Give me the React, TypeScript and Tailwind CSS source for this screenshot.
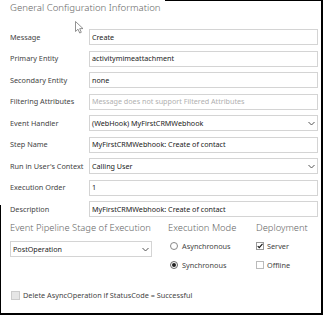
import { ReactNode } from 'react'

const font = { fontFamily: '"Noto Sans", "Open Sans", sans-serif' }

function Chevron() {
  return (
    <svg width="7" height="5" viewBox="0 0 7 5" className="shrink-0">
      <polyline points="0.5,1 3.5,4 6.5,1" fill="none" stroke="#555" strokeWidth="1" />
    </svg>
  )
}

function Field({ label, children }: { label: string; children: ReactNode }) {
  return (
    <div className="flex items-center h-4">
      <div className="w-[79px] shrink-0 text-[7.3px] text-[#444] whitespace-nowrap">{label}</div>
      {children}
    </div>
  )
}

function TextBox({ value, muted }: { value: string; muted?: boolean }) {
  return (
    <div
      className={`flex-1 h-4 border border-[#d4d4d4] flex items-center px-[2px] text-[7.2px] whitespace-nowrap overflow-hidden ${
        muted ? 'text-[#b0b0b0]' : 'text-[#222]'
      }`}
    >
      {value}
    </div>
  )
}

function SelectBox({ value, className = 'flex-1' }: { value: string; className?: string }) {
  return (
    <div
      className={`${className} h-4 border border-[#d4d4d4] flex items-center justify-between pl-[2px] pr-[2px] text-[7.2px] text-[#222] whitespace-nowrap`}
    >
      <span>{value}</span>
      <Chevron />
    </div>
  )
}

function Cursor() {
  return (
    <svg width="9" height="13" viewBox="0 0 9 13" className="absolute left-[75px] top-[21px]">
      <path d="M0.5 0.5 L0.5 10.5 L3 8.2 L4.7 12 L6.3 11.3 L4.7 7.6 L8 7.6 Z" fill="#fff" stroke="#777" strokeWidth="0.8" />
    </svg>
  )
}

export default function App() {
  return (
    <div className="relative w-[323px] h-[315px] bg-white border-r-2 border-b-2 border-black overflow-hidden" style={font}>
      <div className="absolute left-[165px] right-0 top-0 h-[1px] bg-black" />
      <div className="absolute left-0 top-[205px] bottom-0 w-[1px] bg-black" />
      <Cursor />

      <div className="pl-[10px] pr-[3px]">
        <div className="h-[29px] pt-[1px] text-[9.6px] font-light text-[#666] leading-[14px] whitespace-nowrap">
          General Configuration Information
        </div>

        <div className="flex flex-col gap-[5.5px]">
          <Field label="Message"><TextBox value="Create" /></Field>
          <Field label="Primary Entity"><TextBox value="activitymimeattachment" /></Field>
          <Field label="Secondary Entity"><TextBox value="none" /></Field>
          <Field label="Filtering Attributes"><TextBox value="Message does not support Filtered Attributes" muted /></Field>
          <Field label="Event Handler"><SelectBox value="(WebHook) MyFirstCRMWebhook" /></Field>
          <Field label="Step Name"><TextBox value="MyFirstCRMWebhook: Create of contact" /></Field>
          <Field label="Run in User's Context"><SelectBox value="Calling User" /></Field>
          <Field label="Execution Order"><TextBox value="1" /></Field>
          <Field label="Description"><TextBox value="MyFirstCRMWebhook: Create of contact" /></Field>
        </div>

        <div className="flex mt-[4px]">
          <div className="w-[158px] shrink-0">
            <div className="text-[9.4px] font-light text-[#666] leading-[14px] h-[20px] whitespace-nowrap">Event Pipeline Stage of Execution</div>
            <SelectBox value="PostOperation" className="w-[142px]" />
          </div>
          <div className="w-[88px] shrink-0">
            <div className="text-[9.4px] font-light text-[#666] leading-[14px] h-[20px] whitespace-nowrap">Execution Mode</div>
            <div className="flex items-center gap-[4px] h-[12px] mt-[-1px] text-[7.3px] text-[#444]">
              <span className="w-[8px] h-[8px] rounded-full border border-[#888] ml-[2px]" />
              Asynchronous
            </div>
            <div className="flex items-center gap-[4px] h-[12px] mt-[7px] text-[7.3px] text-[#444]">
              <span className="w-[8px] h-[8px] rounded-full border border-[#666] ml-[2px] flex items-center justify-center">
                <span className="w-[4px] h-[4px] rounded-full bg-[#222]" />
              </span>
              Synchronous
            </div>
          </div>
          <div className="flex-1">
            <div className="text-[9.4px] font-light text-[#666] leading-[14px] h-[20px] whitespace-nowrap">Deployment</div>
            <div className="flex items-center gap-[3px] h-[12px] mt-[-1px] text-[7.3px] text-[#444]">
              <span className="w-[8px] h-[8px] border border-[#999] flex items-center justify-center">
                <svg width="7" height="6" viewBox="0 0 7 6">
                  <polyline points="0.8,3 2.6,5 6.4,0.6" fill="none" stroke="#111" strokeWidth="1.3" />
                </svg>
              </span>
              Server
            </div>
            <div className="flex items-center gap-[3px] h-[12px] mt-[7px] text-[7.3px] text-[#444]">
              <span className="w-[8px] h-[8px] border border-[#bbb]" />
              Offline
            </div>
          </div>
        </div>

        <div className="flex items-center gap-[3px] mt-[19px] text-[7.3px] text-[#444]">
          <span className="w-[9px] h-[9px] border border-[#ccc] bg-[#e6e6e6] ml-[1px]" />
          Delete AsyncOperation if StatusCode = Successful
        </div>
      </div>
    </div>
  )
}
